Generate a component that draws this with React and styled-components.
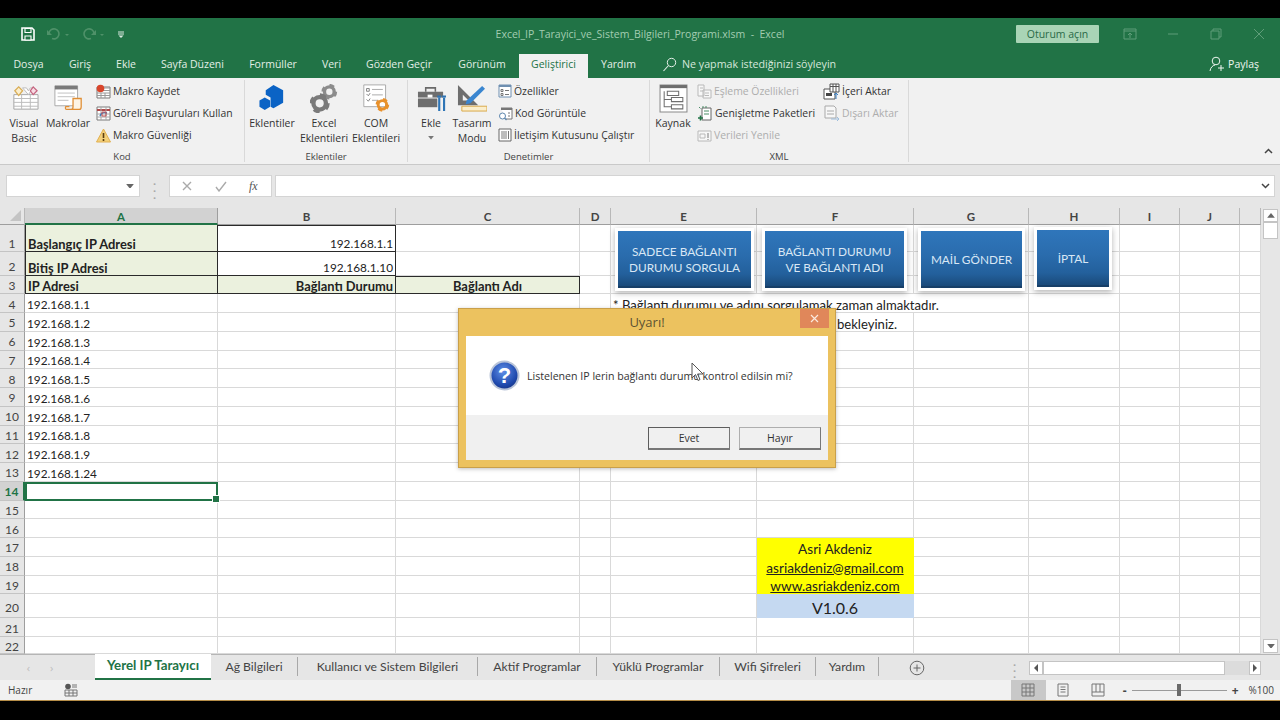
import React from 'react'
import styled, { createGlobalStyle } from 'styled-components'

const GlobalStyle = createGlobalStyle`
    html, body {
        margin: 0;
        padding: 0;
        background: #000;
    }
    * {
        box-sizing: border-box;
    }
`

const UI_FONT = `"Open Sans", "Noto Sans", sans-serif`
const CELL_FONT = `"Lato", "Open Sans", sans-serif`

const Screen = styled.div`
    position: relative;
    width: 1280px;
    height: 720px;
    padding-top: 18px;
    background: #000;
    overflow: hidden;
    font-family: ${UI_FONT};
`

const ExcelWindow = styled.div`
    display: flex;
    flex-direction: column;
    height: 683px;
    background: #e6e6e6;
`

/* title bar */
const TitleBar = styled.div`
    display: grid;
    grid-template-columns: 1fr auto 1fr;
    align-items: center;
    height: 32px;
    background: #217346;
`

const Qat = styled.div`
    display: flex;
    align-items: center;
    gap: 12px;
    padding-left: 21px;
`

const WindowTitle = styled.div`
    font-size: 10.5px;
    color: #a3cdb2;
    white-space: pre;
`

const TitleRight = styled.div`
    display: flex;
    align-items: center;
    justify-content: flex-end;
`

const SignIn = styled.div`
    width: 83px;
    height: 18px;
    margin-right: 9px;
    background: #a9d4b6;
    border-radius: 1px;
    color: #2a6a47;
    font-size: 10.5px;
    line-height: 18px;
    text-align: center;
`

const WinButton = styled.div`
    display: flex;
    align-items: center;
    justify-content: center;
    width: 43px;
    height: 18px;
`

/* ribbon tabs */
const TabRow = styled.div`
    display: flex;
    align-items: stretch;
    height: 28px;
    background: #217346;
`

const Tab = styled.div`
    flex: none;
    width: ${p => p.$w}px;
    margin-top: 4px;
    background: ${p => (p.$active ? '#f1f1f1' : 'transparent')};
    color: ${p => (p.$active ? '#217346' : '#e3efe7')};
    font-size: 10.5px;
    line-height: 20px;
    text-align: center;
    white-space: nowrap;
`

const TellMe = styled.div`
    display: flex;
    align-items: center;
    gap: 5px;
    margin-left: 13px;
    color: #d5e7db;
    font-size: 10.7px;
`

const Share = styled.div`
    display: flex;
    align-items: center;
    gap: 3px;
    margin-left: auto;
    padding-right: 21px;
    color: #eef6f0;
    font-size: 10.5px;
`

/* ribbon */
const Ribbon = styled.div`
    display: flex;
    height: 87px;
    background: #f1f1f1;
    border-bottom: 1px solid #c9c9c9;
`

const Group = styled.div`
    display: flex;
    flex: none;
    flex-direction: column;
    width: ${p => p.$w}px;
    height: 82px;
    margin-top: 2px;
    border-right: 1px solid #d9d9d9;
`

const GroupBody = styled.div`
    display: flex;
    flex: none;
    height: 69px;
    padding-left: ${p => p.$pad || 0}px;
`

const GroupLabel = styled.div`
    height: 13px;
    color: #444;
    font-size: 9.5px;
    line-height: 16px;
    text-align: center;
`

const BigButton = styled.div`
    display: flex;
    flex: none;
    flex-direction: column;
    align-items: center;
    width: ${p => p.$w}px;
    padding-top: 4px;
    color: #333;
    font-size: 10.5px;
    line-height: 15px;
    text-align: center;
    white-space: pre-line;
    > svg:first-child {
        display: block;
        width: auto;
        height: 29px;
        margin-bottom: 3px;
    }
    > svg:last-child:not(:first-child) {
        margin-top: 5px;
    }
`

const SmallColumn = styled.div`
    flex: none;
    width: ${p => (p.$w ? `${p.$w}px` : 'auto')};
    margin-left: ${p => p.$ml || 0}px;
`

const SmallButton = styled.div`
    display: flex;
    align-items: center;
    gap: 2px;
    height: 22px;
    color: ${p => (p.$off ? '#adadad' : '#333')};
    font-size: 10.4px;
    white-space: nowrap;
    svg {
        flex: none;
        opacity: ${p => (p.$off ? 0.45 : 1)};
    }
`

const Collapse = styled.div`
    align-self: flex-end;
    margin-left: auto;
    padding: 0 7px 5px 0;
`

/* formula bar */
const FormulaArea = styled.div`
    display: flex;
    align-items: flex-start;
    height: 43px;
    padding: 10px 5px 0 6px;
`

const NameBox = styled.div`
    display: flex;
    align-items: center;
    justify-content: flex-end;
    width: 134px;
    height: 22px;
    padding-right: 5px;
    background: #fff;
    border: 1px solid #d4d4d4;
`

const Grip = styled.div`
    width: 29px;
    height: 22px;
    color: #a8a8a8;
    font-size: 11px;
    font-weight: 700;
    line-height: 7px;
    padding-top: 2px;
    text-align: center;
    white-space: pre-line;
`

const FxBox = styled.div`
    display: flex;
    align-items: center;
    gap: 22px;
    width: 103px;
    height: 22px;
    margin-right: 3px;
    padding-left: 11px;
    background: #fff;
    border: 1px solid #d4d4d4;
`

const FxLabel = styled.span`
    color: #555;
    font-family: "Liberation Serif", serif;
    font-size: 12px;
    font-style: italic;
`

const FormulaInput = styled.div`
    display: flex;
    flex: 1;
    align-items: center;
    justify-content: flex-end;
    height: 22px;
    padding-right: 4px;
    background: #fff;
    border: 1px solid #d4d4d4;
`

/* sheet */
const SheetRow = styled.div`
    display: flex;
    height: 446px;
`

const Sheet = styled.div`
    position: relative;
    display: grid;
    flex: none;
    grid-template-columns: 25px 193px 178px 184px 31px 146px 157px 115px 91px 60px 60px 21px;
    grid-template-rows: 17px 27.25px 23.75px 18.25px repeat(16, 18.75px) 24px 18.75px 17px;
    width: 1261px;
    background: #fff;
    border-right: 1px solid #b5b5b5;
    font-family: ${CELL_FONT};
`

const Corner = styled.div`
    display: flex;
    align-items: flex-end;
    justify-content: flex-end;
    padding: 0 3px 3px 0;
    background: #e6e6e6;
    border-right: 1px solid #b8b8b8;
    border-bottom: 1px solid #9e9e9e;
`

const ColHead = styled.div`
    background: ${p => (p.$selected ? '#d2d2d2' : '#e6e6e6')};
    border-right: 1px solid ${p => (p.$selected ? '#9e9e9e' : '#b8b8b8')};
    border-bottom: ${p => (p.$selected ? '2px solid #217346' : '1px solid #9e9e9e')};
    color: ${p => (p.$selected ? '#217346' : '#444')};
    font-size: 11.5px;
    font-weight: 700;
    line-height: 17px;
    text-align: center;
`

const RowHead = styled.div`
    display: flex;
    align-items: center;
    justify-content: center;
    padding-top: ${p => p.$pad}px;
    background: ${p => (p.$selected ? '#d2d2d2' : '#e6e6e6')};
    border-right: ${p => (p.$selected ? '2px solid #217346' : '1px solid #9e9e9e')};
    border-bottom: 1px solid #c4c4c4;
    color: ${p => (p.$selected ? '#217346' : '#444')};
    font-size: 12px;
    font-weight: ${p => (p.$selected ? 700 : 400)};
    line-height: 14px;
`

const Cell = styled.div`
    display: flex;
    align-items: flex-end;
    justify-content: ${p => p.$align || 'flex-start'};
    grid-column: ${p => (p.$span ? `span ${p.$span}` : 'auto')};
    padding: 0 2px;
    background: ${p => p.$fill || '#fff'};
    border-right: 1px solid ${p => (p.$box ? '#2a2a2a' : p.$plain ? 'transparent' : '#d9d9d9')};
    border-bottom: 1px solid ${p => (p.$box ? '#2a2a2a' : p.$plain ? 'transparent' : '#d9d9d9')};
    border-left: ${p => (p.$edge ? '1px solid #2a2a2a' : '0')};
    border-top: ${p => (p.$topEdge ? '1px solid #2a2a2a' : '0')};
    color: #222;
    font-size: ${p => p.$size || 13.1}px;
    font-weight: ${p => (p.$bold ? 700 : 400)};
    line-height: ${p => p.$lh || 14}px;
    text-decoration: ${p => (p.$link ? 'underline' : 'none')};
    white-space: nowrap;
`

const ActiveCell = styled.div`
    position: relative;
    border: 2px solid #217346;
    background: #fff;
    &::after {
        content: '';
        position: absolute;
        right: -4px;
        bottom: -4px;
        width: 6px;
        height: 6px;
        background: #217346;
        border: 1px solid #fff;
    }
`

const SheetButton = styled.div`
    position: absolute;
    left: ${p => p.$x}px;
    top: ${p => p.$y}px;
    display: flex;
    align-items: center;
    justify-content: center;
    width: ${p => p.$w}px;
    height: 57px;
    padding-top: 3px;
    background: linear-gradient(180deg, #2f76bb 0%, #2a6cad 45%, #23609c 78%, #1a4a7a 100%);
    border-bottom: 2px solid #173f68;
    box-shadow: 0 0 0 3px #fff, 0 2px 6px 3px rgba(0, 0, 0, 0.3);
    color: #d9e7f5;
    font-size: 11.8px;
    line-height: 16.5px;
    text-align: center;
    white-space: pre-line;
`

const VScroll = styled.div`
    display: flex;
    flex: 1;
    flex-direction: column;
    align-items: center;
    padding: 1px 0;
    background: #e6e6e6;
`

const ScrollBtn = styled.div`
    display: flex;
    align-items: center;
    justify-content: center;
    width: ${p => p.$w || 15}px;
    height: ${p => p.$h || 14}px;
    flex: none;
    background: #fff;
    border: 1px solid #c4c4c4;
`

const VThumb = styled.div`
    width: 15px;
    height: 17px;
    margin-bottom: auto;
    background: #fff;
    border: 1px solid #c4c4c4;
`

/* sheet tabs */
const SheetTabs = styled.div`
    display: flex;
    align-items: center;
    height: 26px;
    background: #e6e6e6;
    border-top: 1px solid #b5b5b5;
`

const SheetNav = styled.div`
    display: flex;
    flex: none;
    justify-content: center;
    gap: 20px;
    width: 95px;
    padding-right: 15px;
    color: #bdbdbd;
    font-size: 11px;
`

const SheetTab = styled.div`
    flex: none;
    width: ${p => p.$w}px;
    height: ${p => (p.$active ? 26 : 19)}px;
    margin-top: ${p => (p.$active ? -1 : 0)}px;
    margin-bottom: ${p => (p.$active ? 0 : 3)}px;
    background: ${p => (p.$active ? '#fff' : 'transparent')};
    border-right: ${p => (p.$active ? '0' : '1px solid #a8a8a8')};
    border-bottom: ${p => (p.$active ? '2px solid #217346' : '0')};
    color: ${p => (p.$active ? '#217346' : '#444')};
    font-family: ${CELL_FONT};
    font-size: ${p => (p.$active ? 13.3 : 12.2)}px;
    font-weight: ${p => (p.$active ? 700 : 400)};
    line-height: ${p => (p.$active ? 23 : 19)}px;
    text-align: center;
    white-space: nowrap;
`

const AddSheet = styled.div`
    flex: none;
    margin-left: 30px;
    display: flex;
`

const HScrollWrap = styled.div`
    display: flex;
    flex: none;
    align-items: center;
    margin-left: 88px;
`

const HGrip = styled.div`
    flex: none;
    width: 16px;
    color: #a8a8a8;
    font-size: 11px;
    font-weight: 700;
    line-height: 6px;
    white-space: pre-line;
`

const HThumb = styled.div`
    flex: none;
    width: 182px;
    height: 14px;
    background: #fff;
    border: 1px solid #c4c4c4;
`

const HTrack = styled.div`
    flex: none;
    width: 24px;
    height: 14px;
    background: #dcdcdc;
`

/* status bar */
const StatusBar = styled.div`
    display: flex;
    align-items: center;
    height: 21px;
    padding-left: 8px;
    background: #f1f1f1;
    border-bottom: 1.5px solid #b58d48;
    color: #444;
    font-size: 10px;
`

const MacroIconWrap = styled.div`
    display: flex;
    margin-left: 32px;
`

const ViewButtons = styled.div`
    display: flex;
    align-items: stretch;
    height: 100%;
    margin-left: auto;
`

const ViewButton = styled.div`
    display: flex;
    align-items: center;
    justify-content: center;
    width: 35px;
    background: ${p => (p.$active ? '#c8c8c8' : 'transparent')};
`

const Zoom = styled.div`
    display: flex;
    align-items: center;
    gap: 3px;
    margin-left: 7px;
    padding-right: 6px;
    color: #444;
    font-size: 10px;
`

const ZoomSign = styled.span`
    font-size: 12px;
    font-weight: 700;
`

const ZoomValue = styled.span`
    margin-left: 7px;
`

const ZoomTrack = styled.div`
    position: relative;
    width: 95px;
    height: 1px;
    background: #9a9a9a;
    margin: 0 2px;
    &::after {
        content: '';
        position: absolute;
        left: 45px;
        top: -6px;
        width: 4px;
        height: 12px;
        background: #6a6a6a;
    }
`

/* dialog */
const Dialog = styled.div`
    position: absolute;
    left: 458px;
    top: 308px;
    display: flex;
    flex-direction: column;
    width: 378px;
    height: 160px;
    padding: 0 7px 7px;
    background: #ecc25f;
    border: 1px solid #c9a04a;
    box-shadow: 0 1px 4px rgba(0, 0, 0, 0.25);
`

const DialogTitle = styled.div`
    position: relative;
    flex: none;
    height: 27px;
    color: #5c5232;
    font-size: 13px;
    line-height: 27px;
    text-align: center;
`

const CloseButton = styled.div`
    position: absolute;
    right: -1px;
    top: 0;
    display: flex;
    align-items: center;
    justify-content: center;
    width: 29px;
    height: 19px;
    background: #e0875a;
`

const DialogBody = styled.div`
    display: flex;
    flex: none;
    align-items: center;
    gap: 7px;
    height: 79px;
    padding-left: 23px;
    background: #fff;
    color: #333;
    font-size: 10.6px;
    white-space: nowrap;
`

const DialogFooter = styled.div`
    display: flex;
    flex: 1;
    justify-content: flex-end;
    gap: 9px;
    padding: 12px 7px 0 0;
    background: #f0f0f0;
`

const DialogButton = styled.div`
    width: 82px;
    height: 23px;
    background: #f0f0f0;
    border: ${p => (p.$primary ? '1.5px solid #5d5d5d' : '1px solid #aeaeae')};
    border-right-color: #777;
    border-bottom: 2px solid #777;
    color: #333;
    font-size: 10.5px;
    line-height: 20px;
    text-align: center;
`

const Cursor = styled.svg`
    position: absolute;
    left: 691px;
    top: 362px;
`

/* icons */
const Svg = ({ size = 16, h, children }) => (
    <svg width={size} height={h || size} viewBox={`0 0 ${size} ${h || size}`} fill="none">{children}</svg>
)

const gearTeeth = (cx, cy, r, fill) => (
    <g>
        <circle cx={cx} cy={cy} r={r * 0.72} fill="none" stroke={fill} strokeWidth={r * 0.5} />
        <circle cx={cx} cy={cy} r={r * 0.98} fill="none" stroke={fill} strokeWidth={r * 0.36}
            strokeDasharray={`${r * 0.72} ${r * 0.82}`} />
    </g>
)

const SaveIcon = () => (
    <Svg size={14}>
        <path d="M1 1h10l2 2v10H1z" stroke="#fff" strokeWidth="1.6" />
        <path d="M4 1.5h6v4H4zM4 9h6v4H4z" fill="#217346" stroke="#fff" strokeWidth="1.1" />
    </Svg>
)

const UndoIcon = ({ flip }) => (
    <svg width="23" height="12" viewBox="0 0 23 12" fill="none">
        <g transform={flip ? 'translate(14 0) scale(-1 1)' : ''}>
            <path d="M2 5a5 5 0 1 1 3 5.5" stroke="#4f9169" strokeWidth="1.6" />
            <path d="M0 2v5h5z" fill="#4f9169" />
        </g>
        <path d="M18 6h4l-2 2z" fill="#4f9169" />
    </svg>
)

const QatMore = () => (
    <Svg size={8}>
        <path d="M1 2h6M1 4h6" stroke="#dbe9e0" />
        <path d="M1.5 5.5h5L4 8z" fill="#dbe9e0" />
    </Svg>
)

const SearchIcon = () => (
    <Svg size={15}>
        <circle cx="9.5" cy="5.5" r="4.2" stroke="#e3efe7" />
        <path d="M6.5 8.5L1.5 14" stroke="#e3efe7" strokeWidth="1.1" />
    </Svg>
)

const ShareIcon = () => (
    <Svg size={16}>
        <circle cx="7" cy="5" r="3.8" stroke="#eef6f0" />
        <path d="M1 15c.5-3.5 2.6-5.5 5-6M9 12h6M12 9v6" stroke="#eef6f0" />
    </Svg>
)

const VisualBasicIcon = () => (
    <Svg size={30}>
        <path d="M4 11h25v15H4z" fill="#fff" stroke="#a5a5a5" />
        <path d="M4 15h25M4 19h25M4 23h25M12 11v15M21 11v15" stroke="#bcbcbc" />
        <path d="M5 7l4-4 4 4-4 5z" fill="#fbeecb" stroke="#d9ad55" strokeWidth="1.3" />
        <path d="M13 4h4l2 3 2-3h3l-5 7z" fill="#fff" stroke="#bcbcbc" />
        <path d="M21 7l3-4 4 4-4 4z" fill="#f7dbe3" stroke="#c5637f" strokeWidth="1.3" />
    </Svg>
)

const MacrosIcon = () => (
    <Svg size={32}>
        <path d="M1 2h25v22H1z" fill="#fff" stroke="#a5a5a5" />
        <path d="M1 2h25v4H1z" fill="#7a7a7a" />
        <path d="M4 10h19M4 14h19M4 18h12" stroke="#bcbcbc" />
        <path d="M15 28h13c2 0 2-2 2-3V16h-9v9c0 2-1 3-2 3h-5c-1 0-2-1-1-3h4" fill="#fdf4e6" stroke="#e08e35" strokeWidth="1.4" />
    </Svg>
)

const RecordIcon = () => (
    <Svg size={15}>
        <path d="M1 3h13v11H1z" fill="#fff" stroke="#7a7a7a" />
        <path d="M7 4h7M7 6.5h7M1 9h13M1 11.5h13M5 9v5M9 9v5" stroke="#9a9a9a" />
        <circle cx="4.5" cy="4.5" r="3.8" fill="#d9452b" />
    </Svg>
)

const RelativeIcon = () => (
    <Svg size={15}>
        <path d="M1 1h13v13H1z" fill="#fff" stroke="#7a7a7a" />
        <path d="M1 4h13" stroke="#b04a4a" strokeWidth="2" />
        <path d="M5 1v13M10 1v13M1 8h13M1 11h13" stroke="#a8a8a8" />
        <path d="M4 10c1-3 4-4 7-3" stroke="#3a7fc1" strokeWidth="1.4" />
        <path d="M6 6h4v4H6z" stroke="#c05050" />
    </Svg>
)

const WarningIcon = () => (
    <Svg size={15}>
        <path d="M7.5 1L14.5 14H.5z" fill="#f3d07a" stroke="#e2b050" />
        <path d="M7.5 5v5M7.5 11v2" stroke="#5c3d10" strokeWidth="1.6" />
    </Svg>
)

const AddinsIcon = () => (
    <Svg size={30}>
        <path d="M16 1l10 5.5v13L16 25l-3-1.5V14l-5-3V6.5z" fill="#0b63c5" />
        <path d="M7 14l5.5 3v6.5L7 27l-5.5-3.5V17z" fill="#0b63c5" />
    </Svg>
)

const ExcelAddinsIcon = () => (
    <Svg size={30}>
        {gearTeeth(20, 8, 7, '#8c8c8c')}
        {gearTeeth(10, 20, 9, '#7a7a7a')}
    </Svg>
)

const ComIcon = () => (
    <Svg size={32}>
        <path d="M2 1h24v24H2z" fill="#fff" stroke="#a5a5a5" />
        <path d="M5 5h3v3H5zM5 11l2 2 2-3M5 17l2 2 2-3" stroke="#7a7a7a" />
        <path d="M11 6h12M11 12h12M11 18h7" stroke="#a5a5a5" />
        {gearTeeth(22.5, 23, 6.5, '#e8912c')}
    </Svg>
)

const InsertIcon = () => (
    <Svg size={30}>
        <path d="M9 8V4h10v4" stroke="#6a6a6a" strokeWidth="1.6" />
        <path d="M1 8h26v6H1z" fill="#6e6e6e" />
        <path d="M1 15h20v9H1z" fill="#6e6e6e" />
        <path d="M11 11h5v3h-5z" fill="#fff" />
        <path d="M23 14v14M28 14v14" stroke="#2e75b6" strokeWidth="2.2" />
        <path d="M21 13h4M26 13h4" stroke="#2e75b6" strokeWidth="2" />
    </Svg>
)

const DesignIcon = () => (
    <Svg size={32} h={30}>
        <path d="M1 1l21 21H1zM6 11v6h6z" fill="#6e6e6e" fillRule="evenodd" />
        <path d="M10 17L26 2l3 3-15 15-5 1z" fill="#3a86d0" />
        <path d="M5 23h26v5H5z" fill="#fbeecb" stroke="#d9a949" />
    </Svg>
)

const PropsIcon = () => (
    <Svg size={14}>
        <path d="M1 1h12v12H1z" fill="#fff" stroke="#6f8fb0" />
        <path d="M1 1h12v2H1z" fill="#6f8fb0" />
        <path d="M3 5.5h2v2H3zM3 9.5h2v2H3z" stroke="#777" />
        <path d="M7 6.5h4M7 10.5h4" stroke="#777" />
    </Svg>
)

const CodeIcon = () => (
    <Svg size={15}>
        <path d="M3 2h11v11H8" fill="#fff" stroke="#777" />
        <path d="M3 2h11v2H3z" fill="#777" />
        <path d="M10 7h2M10 10h2" stroke="#777" />
        <circle cx="4.5" cy="10" r="3" fill="#fff" stroke="#5d86ad" />
        <path d="M6.5 12l2 2" stroke="#5d86ad" strokeWidth="1.3" />
    </Svg>
)

const DialogRunIcon = () => (
    <Svg size={14}>
        <path d="M1 1h12v12H1z" fill="#fff" stroke="#666" />
        <path d="M3 3h6v8H3z" fill="#bdbdbd" />
        <path d="M10 3h1v8h-1z" fill="#777" />
    </Svg>
)

const SourceIcon = () => (
    <Svg size={28}>
        <path d="M1 1h26v26H1z" fill="#fff" stroke="#8a8a8a" />
        <path d="M1 1h26v3H1z" fill="#6e6e6e" />
        <path d="M8 7h11v4H8zM12 13h11v4H12zM12 20h11v4H12zM5 7v15h7M5 15h7" stroke="#6e6e6e" />
    </Svg>
)

const MapPropsIcon = () => (
    <Svg size={15}>
        <path d="M1 1h6v11H1zM6 6h8v8H6z" fill="#fff" stroke="#777" />
        <path d="M3 4h3M3 7h3M8 9h4M8 11.5h4" stroke="#777" />
    </Svg>
)

const PacksIcon = () => (
    <Svg size={16}>
        <path d="M5 3h9v12H5z" fill="#fff" stroke="#666" />
        <path d="M2 2l1.5 1.5M6 1v2M9 1v2M7 6h5M7 9h5" stroke="#4b8d66" />
        <path d="M1 13h5M3.5 10.5v5" stroke="#217346" strokeWidth="1.6" />
    </Svg>
)

const RefreshIcon = () => (
    <Svg size={15}>
        <path d="M1 3h13v10H1z" fill="#fff" stroke="#777" />
        <path d="M3 6h5v4H3z" stroke="#777" />
        <path d="M11 5v5M11 11v1" stroke="#555" strokeWidth="1.6" />
    </Svg>
)

const ImportIcon = () => (
    <Svg size={17}>
        <path d="M1 6h11v10H1z" fill="#fff" stroke="#555" />
        <path d="M7 1h9v8H7z" fill="#fff" stroke="#555" />
        <path d="M7 3.5h9M10 1v8M13 1v8" stroke="#555" />
        <path d="M3 10h6v3H3z" fill="#444" />
        <path d="M13 16v-6M11 12l2-2 2 2" stroke="#3a7fc1" />
    </Svg>
)

const ExportIcon = () => (
    <Svg size={17}>
        <path d="M2 1h9l2 2v10H2z" fill="#fff" stroke="#555" />
        <path d="M4 6h7M4 9h7" stroke="#555" />
        <path d="M8 14h8M14 12l2 2-2 2" stroke="#3a7fc1" />
    </Svg>
)

const Caret = ({ color = '#555', up, w = 8 }) => (
    <svg width={w} height={w * 0.6} viewBox="0 0 8 5">
        <path d={up ? 'M0 5l4-5 4 5z' : 'M0 0h8L4 5z'} fill={color} />
    </svg>
)

const Chevron = ({ up }) => (
    <svg width="9" height="6" viewBox="0 0 9 6" fill="none">
        <path d={up ? 'M1 5l3.5-3.5L8 5' : 'M1 1l3.5 3.5L8 1'} stroke="#444" strokeWidth="1.5" />
    </svg>
)

const QuestionIcon = () => (
    <svg width="31" height="31" viewBox="0 0 31 31">
        <defs>
            <radialGradient id="q" cx="45%" cy="35%" r="70%">
                <stop offset="0%" stopColor="#5f8fe8" />
                <stop offset="70%" stopColor="#1f49ad" />
                <stop offset="100%" stopColor="#15307f" />
            </radialGradient>
        </defs>
        <circle cx="15.5" cy="15.5" r="14" fill="url(#q)" stroke="#b9c4d8" strokeWidth="2" />
        <text x="15.5" y="23" textAnchor="middle" fontFamily="Liberation Sans, sans-serif" fontWeight="700"
            fontSize="22" fill="#fff">?</text>
    </svg>
)

const smallIconStroke = '#777'

const GridView = () => (
    <Svg size={14}>
        <path d="M1 1h12v12H1zM1 5h12M1 9h12M5 1v12M9 1v12" stroke={smallIconStroke} />
    </Svg>
)

const PageView = () => (
    <Svg size={14}>
        <path d="M2 1h10v12H2zM4.5 4h5M4.5 6.5h5M4.5 9h5" stroke={smallIconStroke} />
    </Svg>
)

const BreakView = () => (
    <Svg size={14}>
        <path d="M1 1h12v12H1zM1 9h12M5 1v8M9 1v8" stroke={smallIconStroke} />
    </Svg>
)

const MacroStatusIcon = () => (
    <Svg size={14}>
        <circle cx="4" cy="3.5" r="2.8" fill="#555" />
        <path d="M8 2h5M8 4h5M1 7h12v6H1zM5 7v6M9 7v6M1 10h12" stroke="#777" />
    </Svg>
)

const ribbonTabs = [
    ['Dosya', 57], ['Giriş', 46], ['Ekle', 46], ['Sayfa Düzeni', 87], ['Formüller', 74], ['Veri', 43],
    ['Gözden Geçir', 92], ['Görünüm', 74], ['Geliştirici', 69, true], ['Yardım', 61],
]

const sheetTabs = [
    ['Yerel IP Tarayıcı', 116, true], ['Ağ Bilgileri', 87], ['Kullanıcı ve Sistem Bilgileri', 180],
    ['Aktif Programlar', 119], ['Yüklü Programlar', 123], ['Wifi Şifreleri', 96], ['Yardım', 63],
]

const columns = ['A', 'B', 'C', 'D', 'E', 'F', 'G', 'H', 'I', 'J', '']
const GREEN = '#ebf1de'
const IP = 11.8
const LABEL = 12.9
const CONTACT = 13.6

const cells = {
    A1: { text: 'Başlangıç IP Adresi', $bold: true, $size: LABEL, $fill: GREEN, $box: true, $edge: true },
    B1: { text: '192.168.1.1', $size: IP, $align: 'flex-end', $box: true, $topEdge: true },
    A2: { text: 'Bitiş IP Adresi', $bold: true, $size: LABEL, $fill: GREEN, $box: true, $edge: true },
    B2: { text: '192.168.1.10', $size: IP, $align: 'flex-end', $box: true },
    A3: { text: 'IP Adresi', $bold: true, $size: LABEL, $fill: GREEN, $box: true, $edge: true },
    B3: { text: 'Bağlantı Durumu', $bold: true, $size: LABEL, $align: 'flex-end', $fill: GREEN, $box: true },
    C3: { text: 'Bağlantı Adı', $bold: true, $size: LABEL, $align: 'center', $fill: GREEN, $box: true, $topEdge: true },
    A4: { text: '192.168.1.1', $size: IP },
    A5: { text: '192.168.1.2', $size: IP },
    A6: { text: '192.168.1.3', $size: IP },
    A7: { text: '192.168.1.4', $size: IP },
    A8: { text: '192.168.1.5', $size: IP },
    A9: { text: '192.168.1.6', $size: IP },
    A10: { text: '192.168.1.7', $size: IP },
    A11: { text: '192.168.1.8', $size: IP },
    A12: { text: '192.168.1.9', $size: IP },
    A13: { text: '192.168.1.24', $size: IP },
    E4: { text: '* Bağlantı durumu ve adını sorgulamak zaman almaktadır.', $span: 3 },
    E5: { text: '* Sorgulama bitene kadar lütfen sabırla bekleyiniz.', $span: 2 },
    F17: { text: 'Asri Akdeniz', $size: CONTACT, $align: 'center', $fill: '#ffff00', $plain: true },
    F18: { text: 'asriakdeniz@gmail.com', $size: CONTACT, $align: 'center', $fill: '#ffff00', $plain: true, $link: true },
    F19: { text: 'www.asriakdeniz.com', $size: CONTACT, $align: 'center', $fill: '#ffff00', $plain: true, $link: true },
    F20: { text: 'V1.0.6', $align: 'center', $fill: '#c5d9f1', $plain: true, $size: 16, $lh: 18 },
}

const skipped = { F4: true, G4: true, F5: true }

const sheetButtons = [
    { text: 'SADECE BAĞLANTI\nDURUMU SORGULA', x: 618, y: 23, w: 133 },
    { text: 'BAĞLANTI DURUMU\nVE BAĞLANTI ADI', x: 765, y: 23, w: 139 },
    { text: 'MAİL GÖNDER', x: 921, y: 23, w: 101 },
    { text: 'İPTAL', x: 1037, y: 22, w: 72 },
]

const rowNumbers = Array.from({ length: 22 }, (_, i) => i + 1)
const rowHeadPad = { 1: 11, 2: 6, 3: 2, 20: 5, 22: 4.5 }

export default function App() {
    return (
        <Screen>
            <GlobalStyle />
            <ExcelWindow>
                <TitleBar>
                    <Qat>
                        <SaveIcon />
                        <UndoIcon />
                        <UndoIcon flip />
                        <QatMore />
                    </Qat>
                    <WindowTitle>Excel_IP_Tarayici_ve_Sistem_Bilgileri_Programi.xlsm  -  Excel</WindowTitle>
                    <TitleRight>
                        <SignIn>Oturum açın</SignIn>
                        <WinButton>
                            <Svg size={14}><path d="M1 2h12v10H1zM1 4h12M7 11V6M5 8l2-2 2 2" stroke="#5f9d79" /></Svg>
                        </WinButton>
                        <WinButton>
                            <Svg size={12}><path d="M1 6h10" stroke="#5f9d79" /></Svg>
                        </WinButton>
                        <WinButton>
                            <Svg size={12}><path d="M1 3h8v8H1zM3 3V1h8v8H9" stroke="#5f9d79" /></Svg>
                        </WinButton>
                        <WinButton>
                            <Svg size={12}><path d="M1 1l10 10M11 1L1 11" stroke="#5f9d79" /></Svg>
                        </WinButton>
                    </TitleRight>
                </TitleBar>

                <TabRow>
                    {ribbonTabs.map(([label, w, active]) => (
                        <Tab key={label} $w={w} $active={active}>{label}</Tab>
                    ))}
                    <TellMe>
                        <SearchIcon />
                        Ne yapmak istediğinizi söyleyin
                    </TellMe>
                    <Share>
                        <ShareIcon />
                        Paylaş
                    </Share>
                </TabRow>

                <Ribbon>
                    <Group $w={245}>
                        <GroupBody $pad={2}>
                            <BigButton $w={44}><VisualBasicIcon />{'Visual\nBasic'}</BigButton>
                            <BigButton $w={44}><MacrosIcon />Makrolar</BigButton>
                            <SmallColumn $ml={6}>
                                <SmallButton><RecordIcon />Makro Kaydet</SmallButton>
                                <SmallButton><RelativeIcon />Göreli Başvuruları Kullan</SmallButton>
                                <SmallButton><WarningIcon />Makro Güvenliği</SmallButton>
                            </SmallColumn>
                        </GroupBody>
                        <GroupLabel>Kod</GroupLabel>
                    </Group>
                    <Group $w={163}>
                        <GroupBody $pad={1}>
                            <BigButton $w={52}><AddinsIcon />Eklentiler</BigButton>
                            <BigButton $w={52}><ExcelAddinsIcon />{'Excel\nEklentileri'}</BigButton>
                            <BigButton $w={52}><ComIcon />{'COM\nEklentileri'}</BigButton>
                        </GroupBody>
                        <GroupLabel>Eklentiler</GroupLabel>
                    </Group>
                    <Group $w={242}>
                        <GroupBody $pad={3}>
                            <BigButton $w={40}><InsertIcon />Ekle<Caret color="#777" w={6} /></BigButton>
                            <BigButton $w={42}><DesignIcon />{'Tasarım\nModu'}</BigButton>
                            <SmallColumn $ml={5}>
                                <SmallButton><PropsIcon />Özellikler</SmallButton>
                                <SmallButton><CodeIcon />Kod Görüntüle</SmallButton>
                                <SmallButton><DialogRunIcon />İletişim Kutusunu Çalıştır</SmallButton>
                            </SmallColumn>
                        </GroupBody>
                        <GroupLabel>Denetimler</GroupLabel>
                    </Group>
                    <Group $w={259}>
                        <GroupBody $pad={1}>
                            <BigButton $w={44}><SourceIcon />Kaynak</BigButton>
                            <SmallColumn $ml={2} $w={126}>
                                <SmallButton $off><MapPropsIcon />Eşleme Özellikleri</SmallButton>
                                <SmallButton><PacksIcon />Genişletme Paketleri</SmallButton>
                                <SmallButton $off><RefreshIcon />Verileri Yenile</SmallButton>
                            </SmallColumn>
                            <SmallColumn>
                                <SmallButton><ImportIcon />İçeri Aktar</SmallButton>
                                <SmallButton $off><ExportIcon />Dışarı Aktar</SmallButton>
                            </SmallColumn>
                        </GroupBody>
                        <GroupLabel>XML</GroupLabel>
                    </Group>
                    <Collapse><Chevron up /></Collapse>
                </Ribbon>

                <FormulaArea>
                    <NameBox><Caret color="#666" /></NameBox>
                    <Grip>{'.\n.\n.'}</Grip>
                    <FxBox>
                        <Svg size={12}><path d="M2 2l8 8M10 2l-8 8" stroke="#aaa" strokeWidth="1.4" /></Svg>
                        <Svg size={12}><path d="M1 7l3 4 7-9" stroke="#aaa" strokeWidth="1.4" /></Svg>
                        <FxLabel>fx</FxLabel>
                    </FxBox>
                    <FormulaInput><Chevron /></FormulaInput>
                </FormulaArea>

                <SheetRow>
                    <Sheet>
                        <Corner><svg width="11" height="11" viewBox="0 0 11 11"><path d="M11 0v11H0z" fill="#c4c4c4" /></svg></Corner>
                        {columns.map((col, i) => (
                            <ColHead key={i} $selected={col === 'A'}>{col}</ColHead>
                        ))}
                        {rowNumbers.map(row => (
                            <React.Fragment key={row}>
                                <RowHead $selected={row === 14} $pad={rowHeadPad[row] ?? 3}>{row}</RowHead>
                                {columns.map((col, i) => {
                                    const id = `${col}${row}`
                                    if (skipped[id]) return null
                                    if (id === 'A14') return <ActiveCell key={i} />
                                    const { text, ...props } = cells[id] || {}
                                    return <Cell key={i} {...props}>{text}</Cell>
                                })}
                            </React.Fragment>
                        ))}
                        {sheetButtons.map(b => (
                            <SheetButton key={b.text} $x={b.x} $y={b.y} $w={b.w}>{b.text}</SheetButton>
                        ))}
                    </Sheet>
                    <VScroll>
                        <ScrollBtn $h={13}><Caret up color="#666" /></ScrollBtn>
                        <VThumb />
                        <ScrollBtn><Caret color="#666" /></ScrollBtn>
                    </VScroll>
                </SheetRow>

                <SheetTabs>
                    <SheetNav>
                        <span>‹</span>
                        <span>›</span>
                    </SheetNav>
                    {sheetTabs.map(([label, w, active]) => (
                        <SheetTab key={label} $w={w} $active={active}>{label}</SheetTab>
                    ))}
                    <AddSheet>
                        <Svg size={16}>
                            <circle cx="8" cy="8" r="6.8" stroke="#666" />
                            <path d="M8 4.5v7M4.5 8h7" stroke="#666" />
                        </Svg>
                    </AddSheet>
                    <HScrollWrap>
                        <HGrip>{'.\n.\n.'}</HGrip>
                        <ScrollBtn $w={14}><svg width="4" height="8" viewBox="0 0 4 8"><path d="M4 0v8L0 4z" fill="#555" /></svg></ScrollBtn>
                        <HThumb />
                        <HTrack />
                        <ScrollBtn $w={12}><svg width="4" height="8" viewBox="0 0 4 8"><path d="M0 0v8l4-4z" fill="#555" /></svg></ScrollBtn>
                    </HScrollWrap>
                </SheetTabs>

                <StatusBar>
                    Hazır
                    <MacroIconWrap><MacroStatusIcon /></MacroIconWrap>
                    <ViewButtons>
                        <ViewButton $active><GridView /></ViewButton>
                        <ViewButton><PageView /></ViewButton>
                        <ViewButton><BreakView /></ViewButton>
                    </ViewButtons>
                    <Zoom>
                        <ZoomSign>-</ZoomSign>
                        <ZoomTrack />
                        <ZoomSign>+</ZoomSign>
                        <ZoomValue>%100</ZoomValue>
                    </Zoom>
                </StatusBar>
            </ExcelWindow>

            <Dialog>
                <DialogTitle>
                    Uyarı!
                    <CloseButton>
                        <Svg size={9}><path d="M1 1l7 7M8 1L1 8" stroke="#fbe9df" strokeWidth="1.2" /></Svg>
                    </CloseButton>
                </DialogTitle>
                <DialogBody>
                    <QuestionIcon />
                    Listelenen IP lerin bağlantı durumu kontrol edilsin mi?
                </DialogBody>
                <DialogFooter>
                    <DialogButton $primary>Evet</DialogButton>
                    <DialogButton>Hayır</DialogButton>
                </DialogFooter>
            </Dialog>

            <Cursor width="13" height="20" viewBox="0 0 13 20">
                <path d="M1 1v15l3.5-3.5 2.5 6 2-1-2.5-5.5H12z" fill="#fff" stroke="#555" />
            </Cursor>
        </Screen>
    )
}
